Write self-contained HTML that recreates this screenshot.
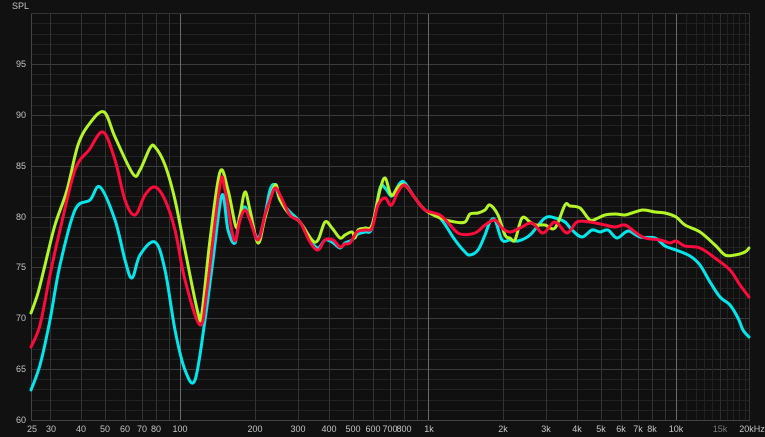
<!DOCTYPE html>
<html><head><meta charset="utf-8"><style>
html,body{margin:0;padding:0;background:#111;width:765px;height:437px;overflow:hidden}
svg{display:block}
text{font-family:"Liberation Sans",sans-serif;font-size:9px;fill:#c4c4c4}
</style></head><body>
<svg id="s" width="765" height="437" viewBox="0 0 765 437">
<rect width="765" height="437" fill="#111"/>
<rect x="31" y="13" width="719" height="407" fill="#101010"/>
<g id="grid"></g>
<text x="12" y="9">SPL</text>
<g text-anchor="end">
<text x="26" y="67">95</text><text x="26" y="118">90</text><text x="26" y="169">85</text><text x="26" y="220">80</text><text x="26" y="270">75</text><text x="26" y="321">70</text><text x="26" y="372">65</text><text x="26" y="423">60</text>
</g>
<g text-anchor="middle">
<text x="32" y="432">25</text><text x="51" y="432">30</text><text x="81" y="432">40</text><text x="105" y="432">50</text><text x="125" y="432">60</text><text x="142" y="432">70</text><text x="156" y="432">80</text><text x="180" y="432">100</text><text x="255" y="432">200</text><text x="298" y="432">300</text><text x="329" y="432">400</text><text x="353" y="432">500</text><text x="373" y="432">600</text><text x="390" y="432">700</text><text x="404" y="432">800</text><text x="429" y="432">1k</text><text x="503" y="432">2k</text><text x="546" y="432">3k</text><text x="577" y="432">4k</text><text x="601" y="432">5k</text><text x="621" y="432">6k</text><text x="638" y="432">7k</text><text x="652" y="432">8k</text><text x="676" y="432">10k</text><text x="720" y="432" style="fill:#777">15k</text><text x="752" y="432">20kHz</text>
</g>
<g fill="none" stroke-width="3" stroke-linejoin="round" stroke-linecap="round">
<polyline class="c" stroke="#00e8ee" points="31,390 40,365 50,320 60,265 75,210 90,200 100,187 115,220 125,260 132,278 140,255 155,242 165,270 175,330 185,370 195,380 205,320 213,260 222,195 228,230 235,243 240,215 245,207 250,220 258,238 265,215 270,190 275,185 280,200 290,212 300,222 310,240 318,248 325,240 332,242 340,248 345,243 352,240 358,234 365,232 372,228 380,188 385,188 390,195 393,195 400,183 405,183 415,198 425,210 440,218 455,240 465,252 470,255 478,250 485,235 490,222 495,220 502,240 510,240 518,241 530,235 545,218 555,218 565,222 572,230 582,237 592,230 600,232 608,230 617,238 628,231 640,237 655,238 665,246 676,250 690,256 700,265 710,282 720,297 730,305 738,318 743,330 749,337"/>
<polyline class="c" stroke="#b4f527" points="31,313 38,293 45,265 55,225 67,190 78,145 90,123 104,112 115,137 133,174 140,170 150,148 155,147 165,165 175,200 185,250 198,313 202,312 210,240 220,172 228,190 236,227 240,215 245,192 250,210 258,243 265,218 275,185 280,200 290,215 300,222 312,240 318,240 325,222 332,228 340,238 345,235 352,232 355,238 358,230 365,228 372,225 380,190 385,178 390,193 393,195 398,187 405,185 415,198 425,210 440,218 455,222 465,222 470,214 478,213 485,210 490,205 498,215 505,235 510,238 515,240 522,218 530,222 536,225 545,225 555,228 565,205 570,206 580,208 590,220 598,218 605,215 615,214 625,215 632,213 643,210 655,212 665,213 676,217 685,225 700,232 715,245 725,255 735,255 745,252 749,248"/>
<polyline class="c" stroke="#ff0a3c" points="31,347 40,325 50,275 60,230 75,170 89,150 103,132 115,160 125,200 135,215 145,195 155,187 165,200 175,230 185,280 200,325 207,290 220,185 225,190 234,240 240,220 245,210 250,220 258,240 265,215 270,200 275,188 280,195 290,215 300,222 310,242 318,250 325,240 333,240 340,247 345,244 350,243 357,232 365,230 372,228 378,205 385,198 390,205 393,203 398,192 405,185 415,198 425,210 440,215 450,225 460,234 475,233 485,225 495,220 502,228 510,232 520,228 532,223 543,233 555,222 567,233 577,222 590,222 605,225 615,227 625,225 635,232 645,238 660,240 670,243 676,241 685,246 700,248 715,258 730,270 740,285 749,297"/>
</g>
</svg>
<script>
(function(){
var g=document.getElementById('grid'),ns='http://www.w3.org/2000/svg';
function L(x1,y1,x2,y2,c){var l=document.createElementNS(ns,'line');l.setAttribute('x1',x1);l.setAttribute('y1',y1);l.setAttribute('x2',x2);l.setAttribute('y2',y2);l.setAttribute('stroke',c);l.setAttribute('stroke-width',1);g.appendChild(l);}
function X(f){return 180+248*Math.log10(f/100);}
for(var d=60;d<=100;d++){var y=Math.round(420-(d-60)*10.17)+0.5;L(31,y,750,y,d%5==0?'#3c3c3c':'#222');}
var f=[30,40,50,60,70,80,90,200,300,400,500,600,700,800,900,2000,3000,4000,5000,6000,7000,8000,9000];
f.forEach(function(v){var x=Math.round(X(v))+0.5;L(x,13,x,420,'#333');});
for(var k=11000;k<20000;k+=1000){var x=Math.round(X(k))+0.5;L(x,13,x,420,k==15000?'#2e2e2e':'#222');}
[100,1000,10000].forEach(function(v){var x=Math.round(X(v))+0.5;L(x,13,x,420,'#6a6a6a');});
L(31.5,13,31.5,420,'#444');L(749.5,13,749.5,420,'#333');L(31,13.5,750,13.5,'#333');L(31,420.5,750,420.5,'#444');
// smooth curves (Catmull-Rom)
document.querySelectorAll('polyline.c').forEach(function(pl){
 var p=pl.getAttribute('points').trim().split(/\s+/).map(function(s){return s.split(',').map(Number);});
 var d='M'+p[0][0]+','+p[0][1];
 for(var i=0;i<p.length-1;i++){
  var p0=p[i-1]||p[i],p1=p[i],p2=p[i+1],p3=p[i+2]||p2;
  var c1=[p1[0]+(p2[0]-p0[0])/6,p1[1]+(p2[1]-p0[1])/6],c2=[p2[0]-(p3[0]-p1[0])/6,p2[1]-(p3[1]-p1[1])/6];
  d+=' C'+c1[0].toFixed(1)+','+c1[1].toFixed(1)+' '+c2[0].toFixed(1)+','+c2[1].toFixed(1)+' '+p2[0]+','+p2[1];
 }
 var path=document.createElementNS(ns,'path');path.setAttribute('d',d);path.setAttribute('stroke',pl.getAttribute('stroke'));
 pl.parentNode.replaceChild(path,pl);
});
})();
</script>
</body></html>
